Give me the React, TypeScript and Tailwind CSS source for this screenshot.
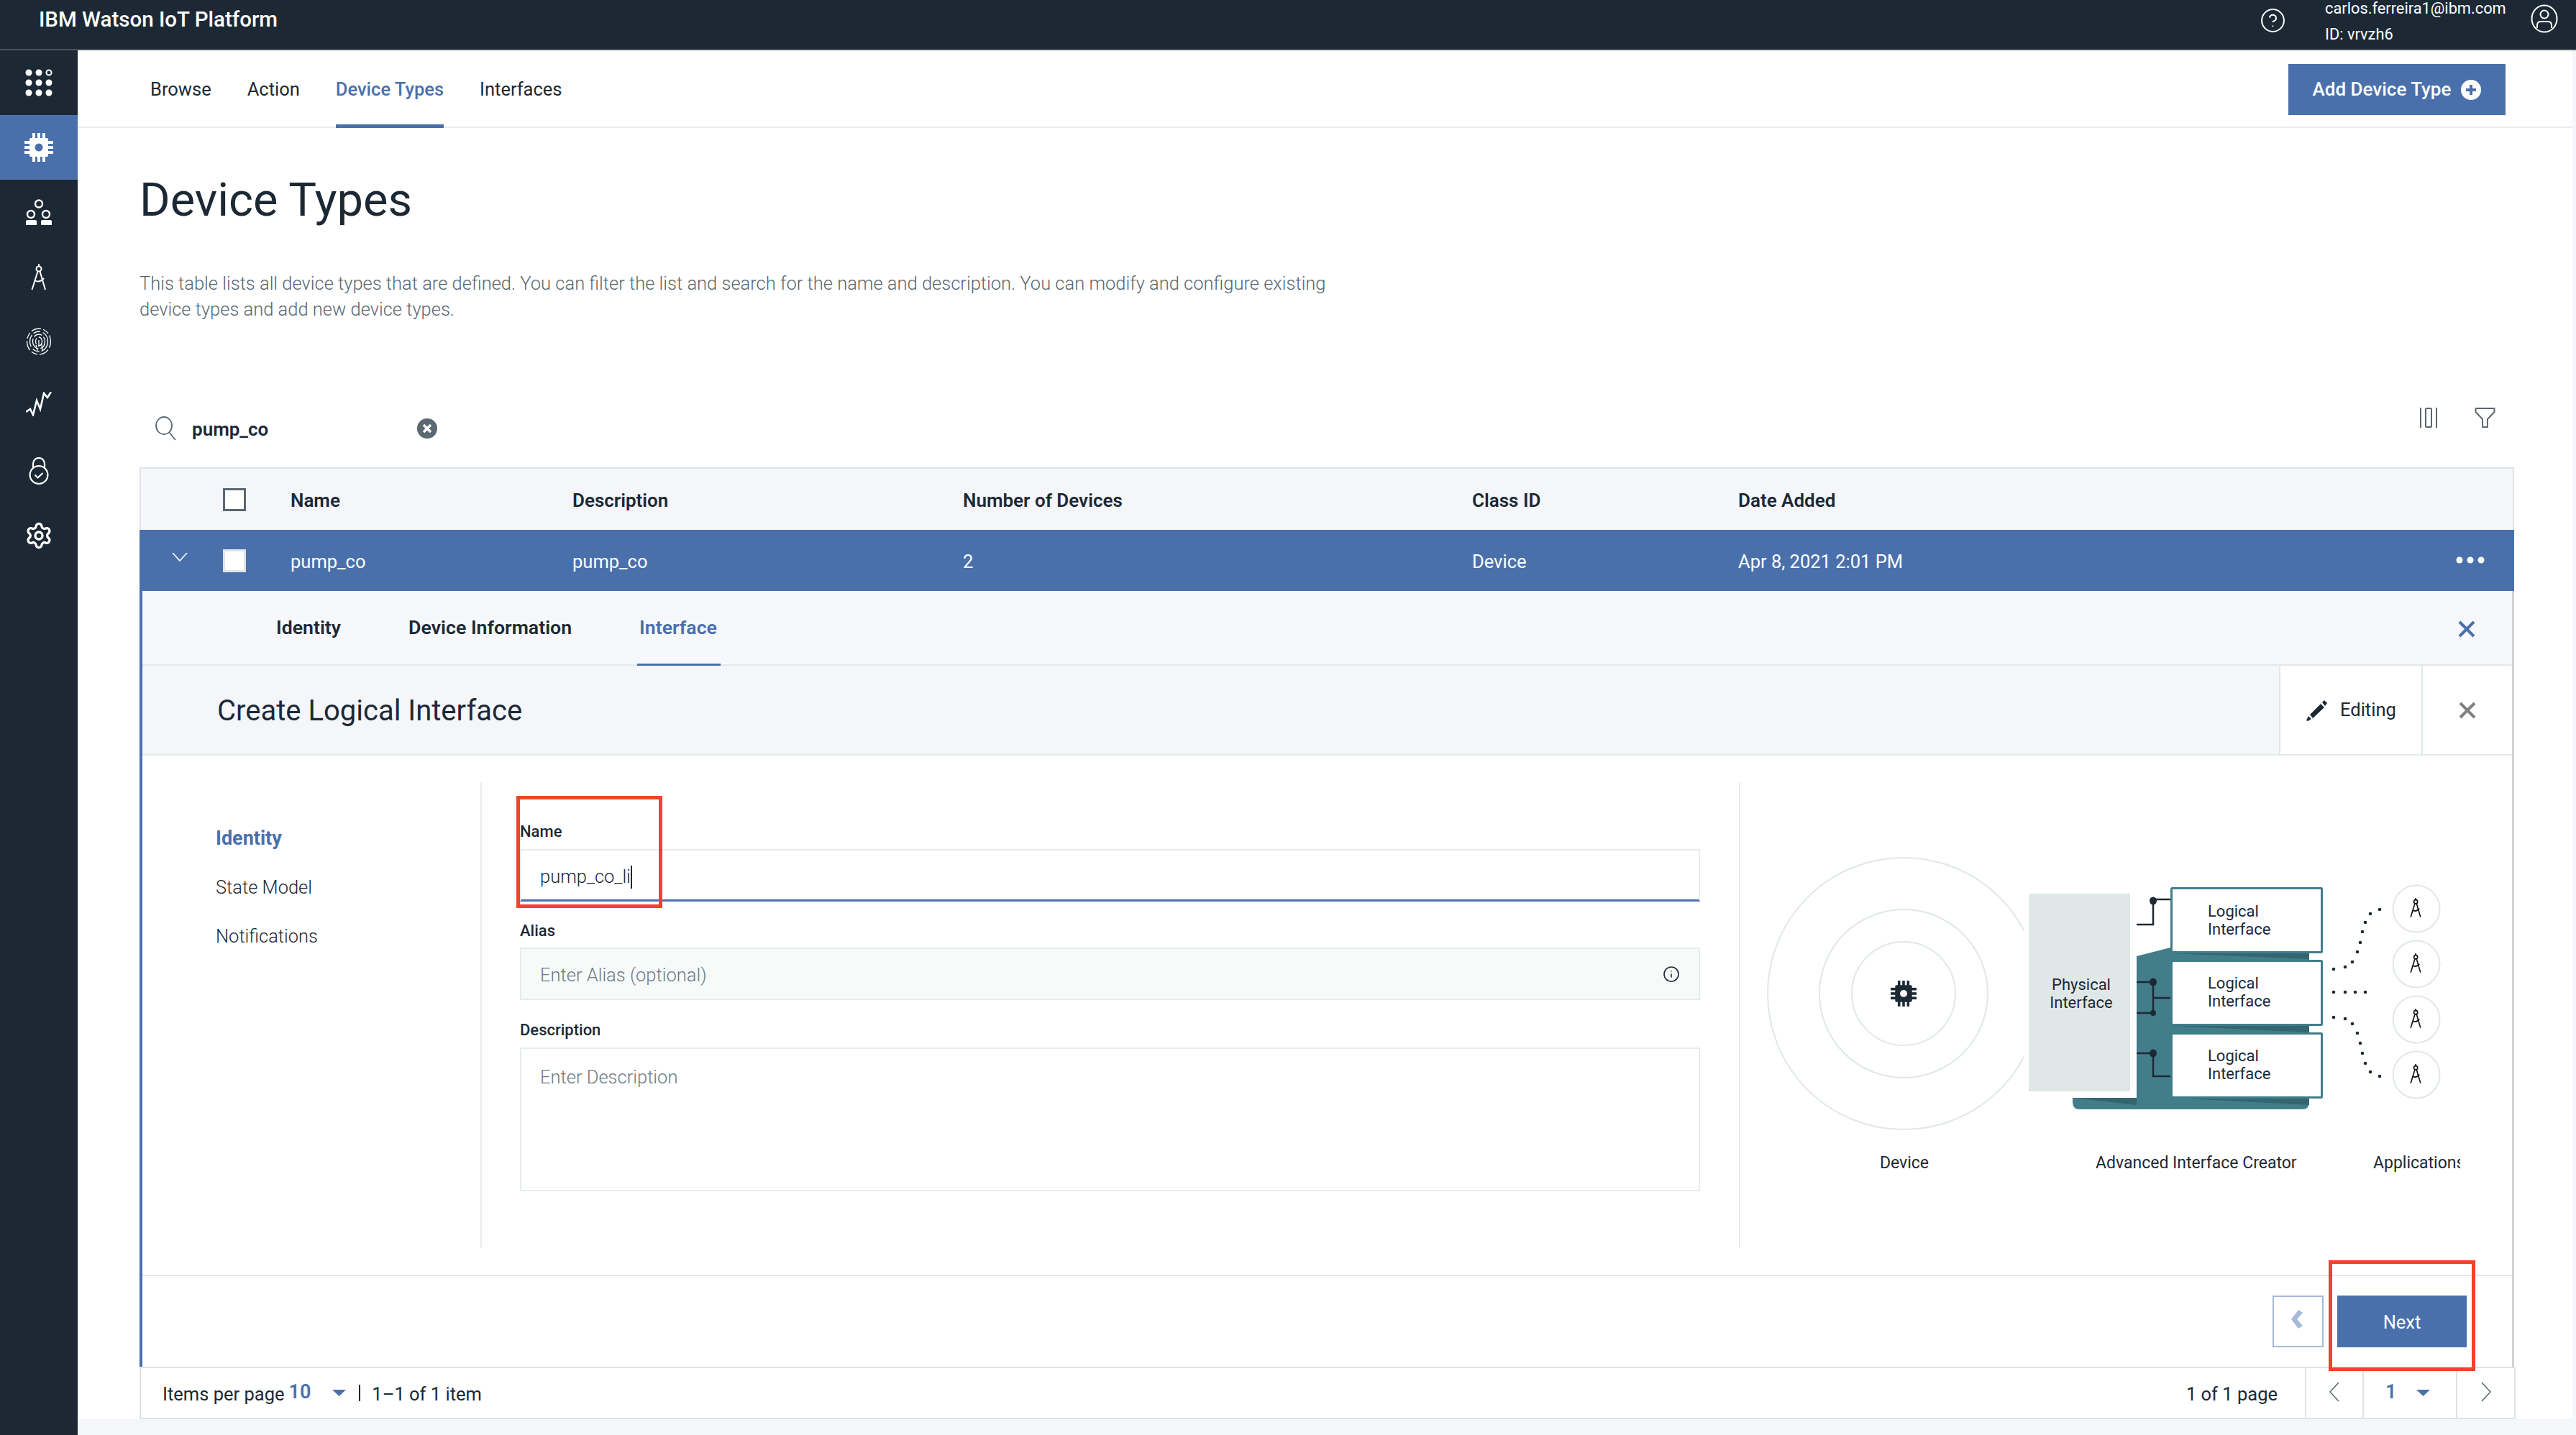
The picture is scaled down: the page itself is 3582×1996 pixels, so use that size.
import { CircleHelp, Info, Settings } from 'lucide-react';

const chipPins = [0, 1, 2];

function ChipIcon({ fg, hole, size }: { fg: string; hole: string; size: number }) {
    return (
        <svg width={size} height={size} viewBox="0 0 40 40">
            {chipPins.map(i => (
                <g key={i} fill={fg}>
                    <rect x={11 + i * 7} y="0" width="4" height="40" />
                    <rect x="0" y={11 + i * 7} width="40" height="4" />
                </g>
            ))}
            <rect x="7" y="7" width="26" height="26" rx="2" fill={fg} />
            <circle cx="20" cy="20" r="5.500" fill={hole} />
        </svg>
    );
}

function CompassLines({ color, width }: { color: string; width: number }) {
    return (
        <g fill="none" stroke={color} strokeWidth={width}>
            <path d="M11 0V4" />
            <circle cx="11" cy="7" r="3.500" />
            <path d="M9.5 10.500 1.5 36M12.5 10.500 20 36" />
            <path d="M5 23Q12 27 18 20" />
        </g>
    );
}

const sideIcons = [
    <svg key="grid" width="40" height="40" viewBox="0 0 40 40" fill="#fff">
        <circle cx="6" cy="6" r="4.5" />
        <circle cx="20" cy="6" r="4.5" />
        <circle cx="34" cy="6" r="3.5" fill="none" stroke="#fff" strokeWidth="2" />
        <circle cx="6" cy="20" r="4.5" />
        <circle cx="20" cy="20" r="4.5" />
        <circle cx="34" cy="20" r="4.5" />
        <circle cx="6" cy="34" r="4.5" />
        <circle cx="20" cy="34" r="4.5" />
        <circle cx="34" cy="34" r="4.5" />
    </svg>,
    <ChipIcon key="chip" fg="#fff" hole="#4a70ac" size={40} />,
    <svg key="people" width="36" height="36" viewBox="0 0 36 36">
        <g fill="none" stroke="#fff" strokeWidth="2.4">
            <circle cx="18" cy="6.5" r="5" />
            <circle cx="7" cy="21" r="5" />
            <circle cx="28" cy="21" r="5" />
        </g>
        <path d="M0 36V31Q0 29 2 29H13Q15 29 15 31V36ZM21 36V31Q21 29 23 29H34Q36 29 36 31V36Z" fill="#fff" />
    </svg>,
    <svg key="compass" width="22" height="37" viewBox="0 0 22 37">
        <CompassLines color="#fff" width={2} />
    </svg>,
    <svg key="print" width="36" height="40" viewBox="0 0 36 40" fill="none" stroke="#fff" strokeWidth="1.3">
        <ellipse cx="18" cy="20" rx="16.500" ry="18" strokeDasharray="9 3 14 3" />
        <ellipse cx="18" cy="20" rx="12.500" ry="14" strokeDasharray="17 3 10 4" />
        <ellipse cx="18" cy="20" rx="8.500" ry="10" strokeDasharray="12 3 18 3" />
        <ellipse cx="18" cy="20" rx="4.500" ry="6" strokeDasharray="9 3" />
        <path d="M18 18V27M14 25 16 33M22 24 23 32" />
    </svg>,
    <svg key="chart" width="36" height="34" viewBox="0 0 36 34" className="-mt-[6px]" fill="none" stroke="#fff" strokeWidth="2.6">
        <path d="M0 28 6 24 10 32 15 12 20 24 25 2 30 8 35 0" />
    </svg>,
    <svg key="lock" width="28" height="38" viewBox="0 0 28 38" fill="none" stroke="#fff" strokeWidth="2.2">
        <circle cx="14" cy="24.5" r="12.4" />
        <path d="M6 15V9A8 8 0 0 1 22 9V15" />
        <path d="M8.5 24.5 12.5 28.5 19.5 22" />
    </svg>,
    <Settings key="gear" size={40} color="#fff" strokeWidth={2} />,
];

const tabs = ['Browse', 'Action', 'Device Types', 'Interfaces'];
const detailTabs = ['Identity', 'Device Information', 'Interface'];
const columns = [
    { width: 'w-[543px]', head: 'Description', cell: 'pump_co' },
    { width: 'w-[708px]', head: 'Number of Devices', cell: '2' },
    { width: 'w-[370px]', head: 'Class ID', cell: 'Device' },
    { width: 'w-[400px]', head: 'Date Added', cell: 'Apr 8, 2021 2:01 PM' },
];

function Checkbox({ border }: { border: string }) {
    return <div className={`w-[32px] h-[32px] bg-white border-[3px] ${border}`} />;
}

function Triangle() {
    return (
        <svg width="19" height="9" viewBox="0 0 19 9">
            <path d="M0 0H19L9.5 9Z" fill="#4a70ac" />
        </svg>
    );
}

function RedBox({ className }: { className: string }) {
    return <div className={`absolute z-10 border-[5px] border-[#f0442a] pointer-events-none ${className}`} />;
}

function Logical({ y, lines }: { y: number; lines: [number, number] }) {
    return (
        <>
            <rect x="3021.5" y={y + 1.5} width="209" height={89} fill="#fff" stroke="#427e8a" strokeWidth="3" rx="1" />
            <text x="3072" y={lines[0]} fontSize="22" fill="#1c2935">Logical</text>
            <text x="3072" y={lines[1]} fontSize="22" fill="#1c2935">Interface</text>
        </>
    );
}

const dots = [
    [3247, 1348], [3263, 1345], [3273, 1338], [3280, 1324], [3284, 1311], [3287, 1296], [3291, 1283], [3298, 1271], [3311, 1265],
    [3247, 1380], [3263, 1380], [3277, 1380], [3291, 1380],
    [3247, 1415], [3263, 1417], [3273, 1424], [3280, 1437], [3284, 1451], [3287, 1465], [3291, 1479], [3298, 1491], [3311, 1497],
];

function Illustration() {
    return (
        <svg width="983" height="470" viewBox="2440 1170 983 470" className="shrink-0 ml-[18px] mt-[82px]">
            <g fill="none" stroke="#e0e8e7" strokeWidth="2">
                <circle cx="2649" cy="1382" r="189" />
                <circle cx="2649" cy="1382" r="117" />
                <circle cx="2649" cy="1382" r="72" />
            </g>
            <g transform="translate(2631 1364)">
                <ChipIcon fg="#1c2935" hole="#fff" size={36} />
            </g>
            <rect x="2816" y="1235" width="157" height="292" fill="#fff" />
            <rect x="2823" y="1243" width="141" height="275" fill="#e0e8e7" />
            <path d="M2973 1330 3020 1318H3213V1533Q3213 1543 3203 1543H2894Q2884 1543 2884 1533V1527H2973Z" fill="#427e8a" />
            <path d="M3023 1326H3213V1334ZM3023 1427H3213V1436ZM3023 1527H3213V1537ZM2884 1527H2973V1537Z" fill="#33666f" />
            <Logical y={1234} lines={[1275, 1300]} />
            <Logical y={1335} lines={[1375, 1400]} />
            <Logical y={1436} lines={[1476, 1501]} />
            <g fill="none" stroke="#1c2935" strokeWidth="2.5">
                <path d="M3020 1251H2996V1286H2973" />
                <path d="M2973 1366H2996V1409H2973M2996 1388H3020" />
                <path d="M2973 1465H2996V1497H3020" />
            </g>
            <g fill="#1c2935">
                <ellipse cx="2996" cy="1253" rx="5" ry="5.5" />
                <ellipse cx="2996" cy="1366" rx="5" ry="5.5" />
                <ellipse cx="2996" cy="1409" rx="4" ry="4" />
                <ellipse cx="2996" cy="1465" rx="5" ry="5.5" />
                {dots.map(([x, y]) => (
                    <circle key={`${x}-${y}`} cx={x} cy={y} r="2.3" />
                ))}
            </g>
            <text x="2896" y="1377" fontSize="22" fill="#1c2935" textAnchor="middle">Physical</text>
            <text x="2896" y="1402" fontSize="22" fill="#1c2935" textAnchor="middle">Interface</text>
            {[1264, 1341, 1418, 1495].map(cy => (
                <g key={cy}>
                    <circle cx="3362" cy={cy} r="32.5" fill="#fff" stroke="#e0e8e7" strokeWidth="2" />
                    <g transform={`translate(3353 ${cy - 15}) scale(0.74)`}>
                        <CompassLines color="#111" width={2.2} />
                    </g>
                </g>
            ))}
            <text x="2650" y="1625" fontSize="23" fill="#1c2935" textAnchor="middle">Device</text>
            <text x="2916" y="1625" fontSize="23" fill="#1c2935">Advanced Interface Creator</text>
            <text x="3302" y="1625" fontSize="23" fill="#1c2935">Applications</text>
        </svg>
    );
}

export default function App() {
    return (
        <div className="w-[3582px] h-[1996px] overflow-hidden flex flex-col bg-white text-[#1c2935] text-[25.5px] [font-family:Roboto,sans-serif]">
            <header className="h-[70px] shrink-0 bg-[#1c2935] border-b-2 border-[#4b5359] flex items-center text-white">
                <span className="ml-[54px] -mt-[14px] text-[29.5px] font-medium">IBM Watson IoT Platform</span>
                <CircleHelp size={37} strokeWidth={1.3} className="ml-auto mr-[2px] -mt-[12px]" />
                <div className="ml-[52px] w-[270px] text-[21.8px] leading-[36px] -mt-[8px]">
                    <div>carlos.ferreira1@ibm.com</div>
                    <div>ID: vrvzh6</div>
                </div>
                <svg width="38" height="40" viewBox="0 0 38 40" className="ml-[16px] mr-[25px] -mt-[16px]" fill="none" stroke="#fff" strokeWidth="2">
                    <ellipse cx="19" cy="20" rx="17.5" ry="18.5" />
                    <circle cx="19" cy="14" r="5.5" />
                    <path d="M9 33V29Q9 24 14 24H24Q29 24 29 29V33" />
                </svg>
            </header>

            <div className="flex-1 flex min-h-0">
                <nav className="w-[108px] shrink-0 bg-[#1c2935]">
                    {sideIcons.map((icon, i) => (
                        <div key={i} className={`h-[90px] flex items-center justify-center ${i === 1 ? 'bg-[#4a70ac]' : ''}`}>
                            {icon}
                        </div>
                    ))}
                </nav>

                <main className="flex-1 bg-[#f4f6fa]">
                    <div className="h-[1904px] bg-white mr-[5px]">
                        <div className="h-[108px] border-b-2 border-[#e8edee] flex items-stretch justify-between pl-[101px] pr-[93px]">
                            <div className="flex gap-[50px]">
                                {tabs.map(tab => (
                                    <div
                                        key={tab}
                                        className={tab === 'Device Types'
                                            ? 'flex items-center border-b-[5px] border-[#4a70ac] text-[#4a70ac] font-medium -mb-[2px] pt-[5px]'
                                            : 'flex items-center pt-[2px]'}
                                    >
                                        {tab}
                                    </div>
                                ))}
                            </div>
                            <div className="self-start mt-[19px] w-[302px] h-[71px] bg-[#4a70ac] text-white text-[26px] font-medium flex items-center justify-center gap-[14px]">
                                Add Device Type
                                <svg width="28" height="28" viewBox="0 0 28 28">
                                    <circle cx="14" cy="14" r="14" fill="#fff" />
                                    <path d="M14 7V21M7 14H21" stroke="#4a70ac" strokeWidth="4" />
                                </svg>
                            </div>
                        </div>

                        <div className="pl-[86px] pr-[81px]">
                            <h1 className="mt-[60px] text-[65px] leading-[80px] font-normal">Device Types</h1>
                            <p className="mt-[58px] w-[1680px] leading-[36px] font-light text-[#5a6872]">
                                This table lists all device types that are defined. You can filter the list and search for the name and description. You can modify and configure existing device types and add new device types.
                            </p>

                            <div className="mt-[114px] mb-[20px] h-[68px] flex items-center">
                                <svg width="32" height="34" viewBox="0 0 32 34" className="ml-[21px]" fill="none" stroke="#5a6872" strokeWidth="1.8">
                                    <ellipse cx="13" cy="13" rx="11" ry="12" />
                                    <path d="M20 22 29 33" />
                                </svg>
                                <span className="ml-[20px] w-[313px] pt-[3px] text-[26px] font-semibold">pump_co</span>
                                <svg width="28" height="28" viewBox="0 0 28 28">
                                    <circle cx="14" cy="14" r="14" fill="#5a6872" />
                                    <path d="M9 9 19 19M19 9 9 19" stroke="#fff" strokeWidth="3.5" />
                                </svg>
                                <svg width="24" height="28" viewBox="0 0 24 28" className="ml-auto mr-[52px] -mt-[30px]" fill="none" stroke="#5a6872" strokeWidth="2">
                                    <path d="M1 0V28M23 0V28" />
                                    <rect x="8" y="1" width="8" height="26" rx="1.5" />
                                </svg>
                                <svg width="29" height="28" viewBox="0 0 29 28" className="mr-[26px] -mt-[30px]" fill="none" stroke="#5a6872" strokeWidth="2">
                                    <path d="M1.5 1H27.5V6L18 16V27H11V16L1.500 6Z" strokeLinejoin="round" />
                                </svg>
                            </div>

                            {/* table */}
                            <div className="h-[87px] bg-[#f4f6fa] border-t-2 border-x-2 border-[#dfe3e6] flex items-center text-[26px]">
                                <div className="ml-[114px]"><Checkbox border="border-[#5a6872]" /></div>
                                <div className="ml-[62px] w-[392px] pt-[3px] font-semibold">Name</div>
                                {columns.map(col => (
                                    <div key={col.head} className={`${col.width} pt-[3px] font-semibold`}>{col.head}</div>
                                ))}
                            </div>
                            <div className="h-[85px] bg-[#4a70ac] text-white flex items-center">
                                <svg width="22" height="12" viewBox="0 0 22 12" className="ml-[45px] -mt-[9px]" fill="none" stroke="#fff" strokeWidth="1.6">
                                    <path d="M1 0 11 11 21 0" />
                                </svg>
                                <div className="ml-[49px]"><Checkbox border="border-[#dfe3e6]" /></div>
                                <div className="ml-[62px] w-[392px] pt-[3px]">pump_co</div>
                                {columns.map(col => (
                                    <div key={col.head} className={`${col.width} pt-[3px]`}>{col.cell}</div>
                                ))}
                                <svg width="40" height="10" viewBox="0 0 40 10" className="ml-auto mr-[41px] -mt-[2px]" fill="#fff">
                                    <circle cx="5" cy="5" r="4.500" />
                                    <circle cx="20" cy="5" r="4.500" />
                                    <circle cx="35" cy="5" r="4.500" />
                                </svg>
                            </div>

                            <div className="h-[1079px] border-l-4 border-r-[3px] border-l-[#4a70ac] border-r-[#cfd3d6] flex flex-col">
                                <div className="h-[104px] shrink-0 bg-[#f6f8fc] border-b-2 border-[#e4e8ea] flex items-stretch pl-[186px] text-[26.7px]">
                                    {detailTabs.map(tab => (
                                        <div
                                            key={tab}
                                            className={tab === 'Interface'
                                                ? 'flex items-center font-semibold text-[#4a70ac] border-b-[3px] border-[#4a70ac] -mb-[2px] pl-[3px] -ml-[3px] w-[116px] pt-[2px]'
                                                : 'flex items-center font-semibold mr-[94px]'}
                                        >
                                            {tab}
                                        </div>
                                    ))}
                                    <svg width="24" height="24" viewBox="0 0 24 24" className="ml-auto mr-[51px] self-center mt-[4px]" fill="none" stroke="#4a70ac" strokeWidth="4">
                                        <path d="M2 2 22 22M22 2 2 22" />
                                    </svg>
                                </div>

                                <div className="h-[125px] shrink-0 bg-[#f4f6fa] border-b-2 border-[#e4eaea] flex items-stretch">
                                    <div className="flex-1 flex items-center pl-[104px] pt-[2px] text-[40px]">Create Logical Interface</div>
                                    <div className="w-[198px] bg-white border-l-2 border-[#e0e8e8] flex items-center pl-[36px] gap-[18px]">
                                        <svg width="29" height="30" viewBox="0 0 29 30" fill="#1c2935">
                                            <path d="M2 30 0 29 3 23 7 27ZM5 21 20 6 25 11 9 26ZM22 4 25 1 29 5 26 9Z" />
                                        </svg>
                                        Editing
                                    </div>
                                    <div className="w-[126px] bg-white border-l-2 border-[#e0e8e8] flex items-center justify-center">
                                        <svg width="24" height="24" viewBox="0 0 24 24" fill="none" stroke="#808080" strokeWidth="4">
                                            <path d="M2 2 22 22M22 2 2 22" />
                                        </svg>
                                    </div>
                                </div>

                                <div className="h-[724px] shrink-0 border-b-2 border-[#e4eaea] flex py-[37px]">
                                    <div className="w-[472px] shrink-0 border-r-2 border-[#e6ecec] pl-[102px] pt-[44px] leading-[68px]">
                                        <div className="text-[27px] font-bold text-[#4a70ac]">Identity</div>
                                        <div className="font-light">State Model</div>
                                        <div className="font-light">Notifications</div>
                                    </div>

                                    <div className="w-[1750px] shrink-0 border-r-2 border-[#e6ecec] pl-[53px] pr-[54px] pt-[55px]">
                                        <div className="relative">
                                            <RedBox className="-left-[5px] -top-[36px] w-[203px] h-[156px]" />
                                            <div className="text-[22px] leading-[28px] font-medium mb-[10px]">Name</div>
                                            <div className="h-[73px] border-x-2 border-t-2 border-b-[3px] border-[#e6ecec] border-b-[#4a70ac] pl-[26px] pt-[5px] flex items-center font-light">
                                                pump_co_li<span className="w-[2px] h-[32px] bg-[#1c2935]" />
                                            </div>
                                        </div>
                                        <div className="mt-[27px] text-[22px] leading-[28px] font-medium mb-[9px]">Alias</div>
                                        <div className="h-[73px] border-2 border-[#e6ecec] bg-[#f8fafa] pl-[26px] pr-[26px] flex items-center justify-between font-light text-[#6d7a82]">
                                            <span className="pt-[4px]">Enter Alias (optional)</span>
                                            <Info size={24} strokeWidth={1.6} className="text-[#1c2935]" />
                                        </div>
                                        <div className="mt-[28px] text-[22px] leading-[28px] font-medium mb-[10px]">Description</div>
                                        <div className="h-[200px] border-2 border-[#e6ecec] pl-[26px] pt-[20px] font-light text-[#6d7a82]">
                                            Enter Description
                                        </div>
                                    </div>

                                    <Illustration />
                                </div>

                                <div className="flex-1 flex items-center justify-end pr-[63px] gap-[19px]">
                                    <div className="w-[71px] h-[72px] border-2 border-[#a5b9da] flex items-center justify-center">
                                        <svg width="16" height="26" viewBox="0 0 16 26" className="-ml-[4px] -mt-[6px]">
                                            <path d="M10 0 16 4 8 13 16 22 10 26 0 13Z" fill="#a5b9da" />
                                        </svg>
                                    </div>
                                    <div className="relative w-[180px] h-[72px] bg-[#4a70ac] text-white flex items-center justify-center pt-[2px]">
                                        <RedBox className="-left-[12px] -top-[49px] w-[204px] h-[154px]" />
                                        Next
                                    </div>
                                </div>
                            </div>

                            <div className="h-[73px] -mr-[2px] border-2 border-[#dfe3e6] flex items-stretch">
                                <div className="flex-1 flex items-center pl-[30px]">
                                    <span className="pt-[3px]">Items per page</span>
                                    <span className="ml-[6px] text-[27px] font-semibold text-[#4a70ac] -mt-[3px]">10</span>
                                    <span className="ml-[30px]"><Triangle /></span>
                                    <span className="ml-[18px] w-[2px] h-[23px] bg-[#1c2935]" />
                                    <span className="ml-[16px] pt-[3px]">1–1 of 1 item</span>
                                    <span className="ml-auto mr-[38px] pt-[3px]">1 of 1 page</span>
                                </div>
                                <div className="w-[80px] border-l-2 border-[#dfe3e6] flex items-center justify-center">
                                    <svg width="14" height="28" viewBox="0 0 14 28" fill="none" stroke="#5a6872" strokeWidth="1.600" className="-mt-[4px]">
                                        <path d="M13 1 1 14 13 27" />
                                    </svg>
                                </div>
                                <div className="w-[130px] border-l-2 border-[#dfe3e6] flex items-center pl-[30px] gap-[28px]">
                                    <span className="text-[27px] font-semibold text-[#4a70ac] -mt-[3px]">1</span>
                                    <Triangle />
                                </div>
                                <div className="w-[81px] border-l-2 border-[#dfe3e6] flex items-center justify-center">
                                    <svg width="14" height="28" viewBox="0 0 14 28" fill="none" stroke="#5a6872" strokeWidth="1.600" className="-mt-[4px]">
                                        <path d="M1 1 13 14 1 27" />
                                    </svg>
                                </div>
                            </div>
                        </div>
                    </div>
                </main>
            </div>
        </div>
    );
}
